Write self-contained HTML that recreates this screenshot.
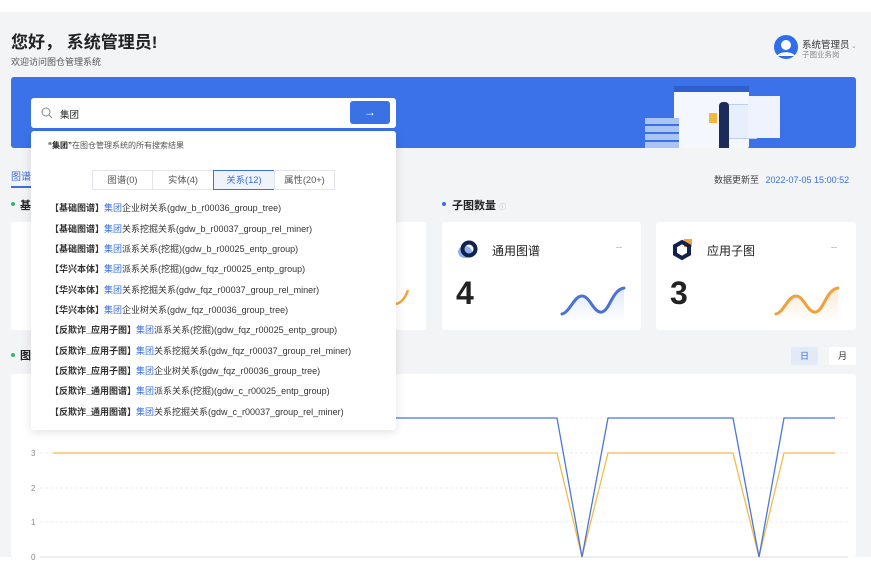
<!DOCTYPE html>
<html><head><meta charset="utf-8"><style>
*{margin:0;padding:0;box-sizing:border-box}
body{width:871px;height:578px;background:#fff;font-family:"Liberation Sans","Noto Sans CJK SC",sans-serif;position:relative;overflow:hidden;color:#222}
.pg{position:absolute;left:0;top:12px;width:871px;height:545px;background:#f3f4f6}
.a{position:absolute}
.card{position:absolute;background:#fff;border-radius:3px}
.dd{position:absolute;left:31px;top:131px;width:365px;height:299px;background:#fff;border-radius:3px;box-shadow:0 2px 10px rgba(0,0,0,.12)}
.row{position:absolute;left:19px;font-size:9px;color:#333;white-space:nowrap}
.row b{font-weight:bold}
.row i{font-style:normal;color:#3a6fe0}
.tab{position:absolute;top:39px;height:20px;font-size:9.3px;line-height:19px;text-align:center;border:1px solid #e3e5ea;color:#555;background:#fff}
</style></head><body>
<div class="pg"></div>
<div class="a" style="left:11px;top:28px;font-size:17px;font-weight:bold;color:#222">您好， 系统管理员!</div>
<div class="a" style="left:11px;top:55px;font-size:9px;color:#555">欢迎访问图仓管理系统</div>
<svg class="a" style="left:774px;top:35px" width="24" height="24"><circle cx="12" cy="12" r="12" fill="#2f6ee8"/><circle cx="12" cy="10" r="5" fill="#fff"/><path d="M3 21c2-5 16-5 18 0" fill="#fff"/></svg>
<div class="a" style="left:802px;top:37px;font-size:9.5px;color:#333">系统管理员</div>
<div class="a" style="left:802px;top:49px;font-size:7.5px;color:#888">子图业务岗</div>
<div class="a" style="left:851px;top:42px;font-size:7px;color:#999">⌄</div>
<div class="a" style="left:11px;top:77px;width:845px;height:71px;background:#3b72ea;border-radius:3px;overflow:hidden">
<div class="a" style="left:663px;top:9px;width:75px;height:62px;background:#f4f7fd;border-radius:2px"></div>
<div class="a" style="left:663px;top:9px;width:75px;height:6px;background:#2d5fd0"></div>
<div class="a" style="left:711px;top:27px;width:35px;height:35px;background:#e8effc;border:1px solid #b9cdf5"></div>
<div class="a" style="left:737px;top:19px;width:32px;height:42px;background:#eef3fd"></div>
<div class="a" style="left:634px;top:41px;width:34px;height:30px;background:repeating-linear-gradient(#a9c4f5 0 6px,#3b72ea 6px 8px)"></div>
<div class="a" style="left:708px;top:25px;width:10px;height:46px;background:#1d2b5a;border-radius:4px 4px 0 0"></div>
<div class="a" style="left:698px;top:36px;width:8px;height:10px;background:#f5b83f"></div>
</div>
<div class="a" style="left:31px;top:98px;width:365px;height:30px;background:#fff;border-radius:3px"></div>
<svg class="a" style="left:41px;top:107px" width="12" height="12"><circle cx="5" cy="5" r="4" stroke="#888" fill="none" stroke-width="1"/><path d="M8 8l3 3" stroke="#888"/></svg>
<div class="a" style="left:60px;top:107px;font-size:9.5px;color:#222">集团</div>
<div class="a" style="left:350px;top:101px;width:40px;height:23px;background:#3a72e6;border-radius:3px;color:#fff;text-align:center;font-size:12px;line-height:22px">→</div>
<div class="a" style="left:11px;top:168px;font-size:10px;color:#3a6fe0">图谱</div>
<div class="a" style="left:11px;top:186px;width:20px;height:2px;background:#3a6fe0"></div>
<div class="a" style="left:11px;top:202px;width:4px;height:4px;border-radius:2px;background:#3ab56b"></div>
<div class="a" style="left:20px;top:197px;font-size:11px;font-weight:bold">基</div>
<div class="a" style="left:11px;top:353px;width:4px;height:4px;border-radius:2px;background:#3ab56b"></div>
<div class="a" style="left:20px;top:347px;font-size:11px;font-weight:bold">图</div>
<div class="a" style="left:714px;top:173px;font-size:9px;color:#444">数据更新至 <span style="color:#3a6fe0;margin-left:4px">2022-07-05 15:00:52</span></div>
<div class="a" style="left:442px;top:202px;width:4px;height:4px;border-radius:2px;background:#3a6fe0"></div>
<div class="a" style="left:452px;top:197px;font-size:11px;font-weight:bold">子图数量 <span style="font-size:7px;color:#aaa;font-weight:normal">ⓘ</span></div>
<div class="card" style="left:11px;top:222px;width:200px;height:108px"></div>
<div class="card" style="left:226px;top:222px;width:200px;height:108px"></div>
<svg class="a" style="left:396px;top:288px" width="14" height="20"><path d="M0 16Q8 14 12 2" stroke="#f1a33c" stroke-width="2.5" fill="none"/></svg>
<div class="card" style="left:442px;top:222px;width:199px;height:108px">
<svg class="a" style="left:15px;top:16px" width="24" height="24"><ellipse cx="8" cy="14" rx="7" ry="6" fill="#8fb0f2"/><circle cx="12" cy="11" r="6.5" fill="none" stroke="#13214d" stroke-width="4"/></svg>
<div class="a" style="left:50px;top:20px;font-size:12px;color:#222">通用图谱</div>
<div class="a" style="left:174px;top:20px;font-size:9px;color:#999">--</div>
<div class="a" style="left:14px;top:53px;font-size:32px;font-weight:bold;color:#222">4</div>
<svg class="a" style="left:118px;top:62px" width="70" height="38"><defs><linearGradient id="gb" x1="0" y1="0" x2="0" y2="1"><stop offset="0" stop-color="#dfe7fb"/><stop offset="1" stop-color="#fff"/></linearGradient><linearGradient id="go" x1="0" y1="0" x2="0" y2="1"><stop offset="0" stop-color="#fde9d3"/><stop offset="1" stop-color="#fff"/></linearGradient></defs><path d="M2 30C10 28 14 12 22 12S34 30 42 28S52 6 64 4L64 38L2 38Z" fill="url(#gb)"/><path d="M2 30C10 28 14 12 22 12S34 30 42 28S52 6 64 4" stroke="#4a72d6" stroke-width="3" fill="none" stroke-linecap="round"/></svg>
</div>
<div class="card" style="left:656px;top:222px;width:200px;height:108px">
<svg class="a" style="left:16px;top:16px" width="24" height="24"><rect x="12" y="1" width="8" height="8" fill="#f1a33c"/><polygon points="10,4 17,8 17,16 10,20 3,16 3,8" fill="none" stroke="#13214d" stroke-width="4"/></svg>
<div class="a" style="left:51px;top:20px;font-size:12px;color:#222">应用子图</div>
<div class="a" style="left:175px;top:20px;font-size:9px;color:#999">--</div>
<div class="a" style="left:14px;top:53px;font-size:32px;font-weight:bold;color:#222">3</div>
<svg class="a" style="left:118px;top:62px" width="70" height="38"><path d="M2 30C10 28 14 12 22 12S34 30 42 28S52 6 64 4L64 38L2 38Z" fill="url(#go)"/><path d="M2 30C10 28 14 12 22 12S34 30 42 28S52 6 64 4" stroke="#f0a03c" stroke-width="3" fill="none" stroke-linecap="round"/></svg>
</div>
<div class="a" style="left:791px;top:347px;width:27px;height:18px;background:#e3eaf7;border-radius:2px;font-size:9px;color:#3a6fe0;text-align:center;line-height:18px">日</div>
<div class="a" style="left:829px;top:347px;width:27px;height:18px;background:#fff;border-radius:2px;font-size:9px;color:#333;text-align:center;line-height:18px">月</div>
<div class="card" style="left:11px;top:374px;width:845px;height:183px"></div>
<svg class="a" style="left:0;top:0" width="871" height="578">
<g stroke="#eceef2" stroke-width="1" stroke-dasharray="3 2"><line x1="40" y1="418" x2="848" y2="418"/><line x1="40" y1="453" x2="848" y2="453"/><line x1="40" y1="488" x2="848" y2="488"/><line x1="40" y1="522" x2="848" y2="522"/></g>
<line x1="40" y1="557" x2="848" y2="557" stroke="#ddd"/>
<g font-size="8" fill="#888" font-family="Liberation Sans"><text x="31" y="456">3</text><text x="31" y="491">2</text><text x="31" y="525">1</text><text x="31" y="560">0</text></g>
<polyline points="53,453 557,453 582,557 608,453 733,453 759,557 784,453 835,453" fill="none" stroke="#f5b94a" stroke-width="1.3"/>
<polyline points="53,418 557,418 582,557 608,418 733,418 759,557 784,418 835,418" fill="none" stroke="#4a78d8" stroke-width="1.3"/>
</svg>
<div class="dd">
<div class="a" style="left:17px;top:9px;font-size:8px;color:#555"><b style="color:#222">“集团”</b>在图仓管理系统的所有搜索结果</div>
<div class="tab" style="left:61px;width:61px">图谱(0)</div>
<div class="tab" style="left:121px;width:62px">实体(4)</div>
<div class="tab" style="left:182px;width:62px;border-color:#3a6fe0;color:#3a6fe0;background:#eef3fd">关系(12)</div>
<div class="tab" style="left:243px;width:61px">属性(20+)</div>
<div class="row" style="top:70px"><b>【基础图谱】</b><i>集团</i>企业树关系(gdw_b_r00036_group_tree)</div>
<div class="row" style="top:91px"><b>【基础图谱】</b><i>集团</i>关系挖掘关系(gdw_b_r00037_group_rel_miner)</div>
<div class="row" style="top:111px"><b>【基础图谱】</b><i>集团</i>派系关系(挖掘)(gdw_b_r00025_entp_group)</div>
<div class="row" style="top:131px"><b>【华兴本体】</b><i>集团</i>派系关系(挖掘)(gdw_fqz_r00025_entp_group)</div>
<div class="row" style="top:152px"><b>【华兴本体】</b><i>集团</i>关系挖掘关系(gdw_fqz_r00037_group_rel_miner)</div>
<div class="row" style="top:172px"><b>【华兴本体】</b><i>集团</i>企业树关系(gdw_fqz_r00036_group_tree)</div>
<div class="row" style="top:192px"><b>【反欺诈_应用子图】</b><i>集团</i>派系关系(挖掘)(gdw_fqz_r00025_entp_group)</div>
<div class="row" style="top:213px"><b>【反欺诈_应用子图】</b><i>集团</i>关系挖掘关系(gdw_fqz_r00037_group_rel_miner)</div>
<div class="row" style="top:233px"><b>【反欺诈_应用子图】</b><i>集团</i>企业树关系(gdw_fqz_r00036_group_tree)</div>
<div class="row" style="top:253px"><b>【反欺诈_通用图谱】</b><i>集团</i>派系关系(挖掘)(gdw_c_r00025_entp_group)</div>
<div class="row" style="top:274px"><b>【反欺诈_通用图谱】</b><i>集团</i>关系挖掘关系(gdw_c_r00037_group_rel_miner)</div>
</div>
</body></html>
